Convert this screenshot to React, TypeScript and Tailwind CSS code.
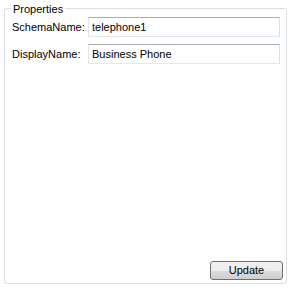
import React from "react";

export default function App() {
  return (
    <div
      className="w-[292px] h-[290px] bg-white pt-[3px] pl-[4px] text-[11px] text-black"
      style={{ fontFamily: '"Liberation Sans", Arial, sans-serif' }}
    >
      {/* GROUP BOX */}
      <div className="relative w-[283px] h-[281px] pt-[5px]">
        <div className="absolute left-0 right-0 top-[5px] bottom-0 border border-[#d5dfe5] rounded-[3px]" />
        <div className="absolute left-[7px] top-0 bg-white px-[2px] leading-[13px]">Properties</div>

        <div className="relative flex flex-col h-full pl-[8px] pr-[4px] pt-[9px] pb-[4px]">
          <Row label="SchemaName:" value="telephone1" />
          <Row label="DisplayName:" value="Business Phone" className="mt-[7px]" />

          <div className="flex-1" />

          <div className="flex justify-end">
            <button className="w-[73px] h-[19px] rounded-[3px] border border-[#707070] bg-[linear-gradient(to_bottom,#f2f2f2_0%,#ebebeb_50%,#dddddd_51%,#cfcfcf_100%)] leading-[17px] text-center">
              Update
            </button>
          </div>
        </div>
      </div>
    </div>
  );
}

function Row({
  label,
  value,
  className = "",
}: {
  label: string;
  value: string;
  className?: string;
}) {
  return (
    <div className={`flex items-center ${className}`}>
      <div className="w-[76px] shrink-0">{label}</div>
      <div className="w-[192px] h-[20px] border border-[#e2e3ea] border-t-[#abadb3] border-b-[#e3e9ef] border-r-[#dbdfe6] px-[3px] leading-[18px]">
        {value}
      </div>
    </div>
  );
}
